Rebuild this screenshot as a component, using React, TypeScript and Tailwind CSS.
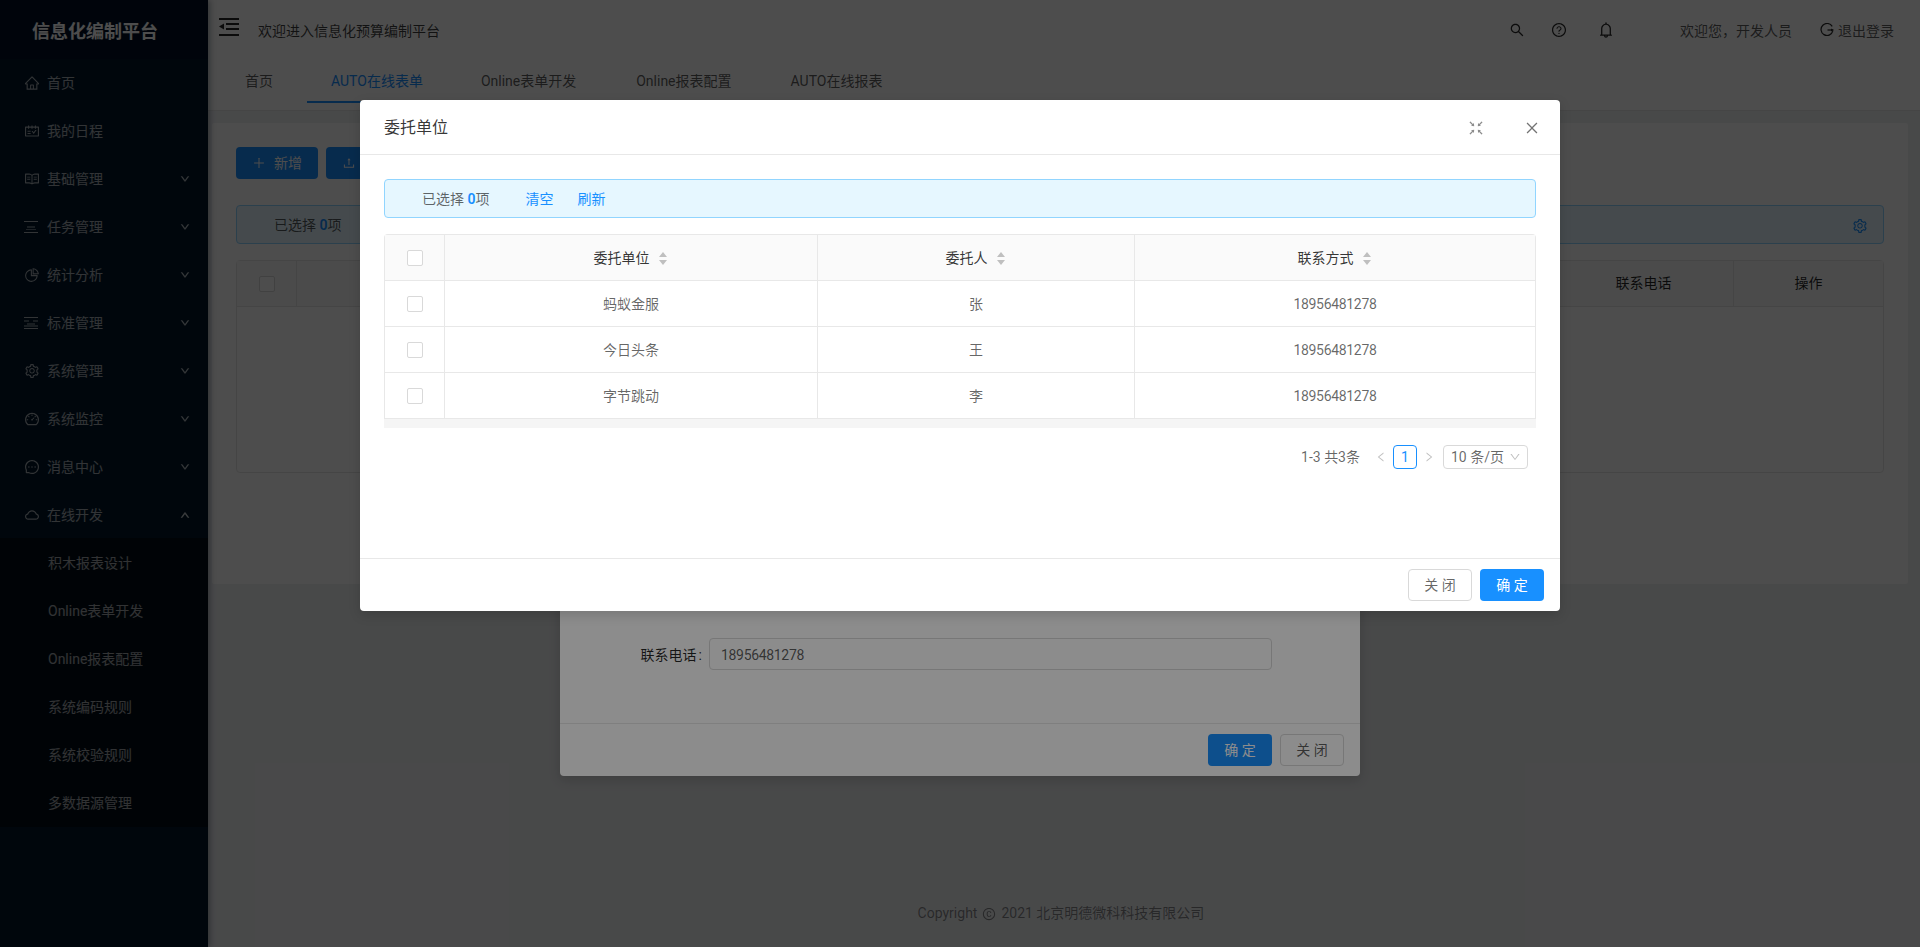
import React from "react";
import {
  AiOutlineHome, AiOutlineSchedule, AiOutlineRead, AiOutlinePieChart, AiOutlineSetting,
  AiOutlineDashboard, AiOutlineMessage, AiOutlineCloud, AiOutlineDown, AiOutlineUp,
  AiOutlineSearch, AiOutlineQuestionCircle, AiOutlineBell, AiOutlineFullscreenExit, AiOutlineClose,
  AiOutlineLeft, AiOutlineRight, AiOutlinePlus, AiOutlineUpload, AiOutlineCopyrightCircle,
} from "react-icons/ai";

const FONT = "font-['Roboto','Noto_Sans_CJK_SC',sans-serif]";

const TaskIcon = () => (
  <svg width="14" height="14" viewBox="0 0 14 14" fill="none" stroke="currentColor" strokeWidth="1">
    <path d="M0 1.5h14M3 7h8M0 12.5h14" />
    <path d="M2 9.5h10" strokeWidth="0.6" />
  </svg>
);
const StdIcon = () => (
  <svg width="14" height="14" viewBox="0 0 14 14" fill="none" stroke="currentColor" strokeWidth="1">
    <path d="M0 1.5h14M0 5h5M9 5h5M3 8h8M0 12.5h14M0 10h14" />
  </svg>
);
const LogoutIcon = () => (
  <svg width="14" height="14" viewBox="0 0 14 14" fill="none" stroke="currentColor" strokeWidth="1.2">
    <path d="M12.2 3.4A6 6 0 1 0 12.8 8.2" />
    <path d="M7.5 7h6" />
    <path d="M11.2 5.4L13.4 7l-2.2 1.6z" fill="currentColor" stroke="none" />
  </svg>
);
const MenuFold = () => (
  <svg width="20" height="18" viewBox="0 0 20 18" fill="currentColor">
    <rect x="0" y="0" width="20" height="2" />
    <rect x="7" y="5" width="13" height="2" />
    <rect x="7" y="10" width="13" height="2" />
    <rect x="0" y="16" width="20" height="2" />
    <path d="M5 5.5v6L0 8.5z" />
  </svg>
);
const Sorter = () => (
  <svg width="8" height="13" viewBox="0 0 8 13" fill="#bfbfbf" className="ml-[9px]">
    <path d="M4 0L8 5H0zM4 13L0 8h8z" />
  </svg>
);
const Check = () => (
  <span className="block w-4 h-4 mx-auto bg-white border border-[#d9d9d9] rounded-[2px]" />
);

const menu: { label: string; icon: React.ReactNode; arrow?: "down" | "up" }[] = [
  { label: "首页", icon: <AiOutlineHome size={16} /> },
  { label: "我的日程", icon: <AiOutlineSchedule size={16} /> },
  { label: "基础管理", icon: <AiOutlineRead size={16} />, arrow: "down" },
  { label: "任务管理", icon: <TaskIcon />, arrow: "down" },
  { label: "统计分析", icon: <AiOutlinePieChart size={16} />, arrow: "down" },
  { label: "标准管理", icon: <StdIcon />, arrow: "down" },
  { label: "系统管理", icon: <AiOutlineSetting size={16} />, arrow: "down" },
  { label: "系统监控", icon: <AiOutlineDashboard size={16} />, arrow: "down" },
  { label: "消息中心", icon: <AiOutlineMessage size={16} />, arrow: "down" },
  { label: "在线开发", icon: <AiOutlineCloud size={16} />, arrow: "up" },
];
const sub = ["积木报表设计", "Online表单开发", "Online报表配置", "系统编码规则", "系统校验规则", "多数据源管理"];

function Sidebar() {
  return (
    <aside className="w-[208px] shrink-0 h-full bg-[#001529] text-white/65 text-[14px] shadow-[2px_0_6px_rgba(0,21,41,0.35)] z-10">
      <div className="h-[59px] pt-[3px] bg-[#001226] flex items-center justify-center pr-[18px] text-[18px] font-bold text-white">
        信息化编制平台
      </div>
      <div className="pt-[4px]">
        {menu.map((m) => (
          <div key={m.label} className="h-10 mb-2 flex items-center pl-6 pr-[18px]">
            <span className="w-6 flex items-center -ml-px pl-px">{m.icon}</span>
            <span className="flex-1">{m.label}</span>
            {m.arrow === "down" && <AiOutlineDown size={10} strokeWidth={60} />}
            {m.arrow === "up" && <AiOutlineUp size={10} strokeWidth={90} />}
          </div>
        ))}
        <div className="bg-[#000c17] -mt-[5px] pt-[5px] pb-[4px] flex flex-col gap-2">
          {sub.map((s) => (
            <div key={s} className="h-10 flex items-center pl-12">
              {s}
            </div>
          ))}
        </div>
      </div>
    </aside>
  );
}

function Topbar() {
  return (
    <header className="h-[60px] shrink-0 bg-white flex items-center pl-[11px] shadow-[0_1px_4px_rgba(0,21,41,0.08)] text-black/65">
      <span className="text-black/85 -mt-[6px]"><MenuFold /></span>
      <span className="ml-[19px] mt-[2px] text-[14px] text-black/75">欢迎进入信息化预算编制平台</span>
      <div className="ml-auto flex items-center text-black/85">
        <AiOutlineSearch size={16} className="mr-[26px]" />
        <AiOutlineQuestionCircle size={16} className="mr-[30px]" />
        <AiOutlineBell size={18} className="mr-[65px]" />
        <span className="text-[14px] mt-[2px] text-black/65 mr-[28px]">欢迎您，开发人员</span>
        <span className="mr-1"><LogoutIcon /></span>
        <span className="text-[14px] mt-[2px] text-black/65 mr-[26px]">退出登录</span>
      </div>
    </header>
  );
}

const tabs: { t: string; cls: string }[] = [
  { t: "首页", cls: "border-transparent" },
  { t: "AUTO在线表单", cls: "text-[#1890ff] border-[#1890ff]" },
  { t: "Online表单开发", cls: "border-transparent" },
  { t: "Online报表配置", cls: "border-transparent ml-[2px]" },
  { t: "AUTO在线报表", cls: "border-transparent ml-[1px]" },
];

function Tabs() {
  return (
    <nav className="h-[51px] shrink-0 bg-white border-b border-[#e8e8e8] flex pl-[13px] gap-[10px] text-[14px] text-black/65">
      {tabs.map((x) => (
        <div key={x.t} className={"px-6 pt-[2px] h-[43px] flex items-center border-b-2 " + x.cls}>
          {x.t}
        </div>
      ))}
    </nav>
  );
}

function PageBody() {
  return (
    <main className="flex-1 min-h-0 bg-[#f0f2f5] pl-[4px] pt-3 flex flex-col">
      <div className="h-[461px] bg-white rounded-[2px] px-6 pt-6 w-[1696px] shrink-0">
        <div className="flex gap-2 mb-[26px]">
          <div className="w-[82px] h-8 bg-[#1890ff] rounded text-white text-[14px] flex items-center justify-center gap-2">
            <AiOutlinePlus size={14} />新增
          </div>
          <div className="w-[82px] h-8 bg-[#1890ff] rounded text-white text-[14px] flex items-center justify-center gap-2">
            <AiOutlineUpload size={14} />导入
          </div>
        </div>
        <div className="h-[39px] bg-[#e6f7ff] border border-[#91d5ff] rounded flex items-center pl-[37px] pr-[15px] pt-[2px] text-[14px] text-black/65 mb-4">
          已选择&nbsp;<b className="font-semibold text-[#1890ff]">0</b>项
          <AiOutlineSetting size={16} className="ml-auto text-[#1890ff]" />
        </div>
        <div className="h-[213px] border border-[#e8e8e8] rounded-t-[4px] rounded-b-[4px]">
          <div className="h-[46px] bg-[#fafafa] border-b border-[#e8e8e8] flex items-center text-[14px] text-black/85">
            <div className="w-[60px] h-full flex items-center border-r border-[#e8e8e8]"><Check /></div>
            <div className="flex-1" />
            <div className="w-[180px] h-full text-center leading-[45px] border-l border-[#e8e8e8]">联系电话</div>
            <div className="w-[150px] h-full text-center leading-[45px] border-l border-[#e8e8e8]">操作</div>
          </div>
        </div>
      </div>
      <footer className="mt-auto h-[60px] flex items-start justify-center pr-[10px] text-[14px] text-black/45">
        <span className="flex items-center gap-[5px] pt-[16px]">Copyright <AiOutlineCopyrightCircle size={14} /> 2021 北京明德微科科技有限公司</span>
      </footer>
    </main>
  );
}

function ModalBehind() {
  return (
    <div className="absolute left-[560px] top-[300px] w-[800px] h-[476px] bg-white rounded shadow-[0_4px_12px_rgba(0,0,0,0.15)] flex flex-col text-[14px]">
      <div className="flex-1 flex flex-col justify-end pb-[53px]">
        <div className="flex items-center">
          <label className="w-[149px] text-right pr-[7px] pt-[2px] text-black/85">联系电话<span className="ml-[2px]">:</span></label>
          <div className="w-[563px] h-8 border border-[#d9d9d9] rounded flex items-center px-[11px] pt-[2px] text-black/65 tracking-[-0.023em]">
            18956481278
          </div>
        </div>
      </div>
      <div className="h-[53px] border-t border-[#e8e8e8] flex items-center justify-end gap-2 pr-4">
        <div className="w-16 h-8 bg-[#1890ff] text-white rounded flex items-center justify-center">确 定</div>
        <div className="w-16 h-8 border border-[#d9d9d9] text-black/65 rounded flex items-center justify-center">关 闭</div>
      </div>
    </div>
  );
}

const rows = [
  ["蚂蚁金服", "张"],
  ["今日头条", "王"],
  ["字节跳动", "李"],
];

function ModalTop() {
  return (
    <div className="absolute left-[360px] top-[100px] w-[1200px] h-[511px] bg-white rounded shadow-[0_4px_12px_rgba(0,0,0,0.15)] flex flex-col text-[14px] text-black/60">
      <div className="h-[55px] shrink-0 pt-[2px] border-b border-[#e8e8e8] flex items-center pl-6 text-[16px] text-black/80">
        委托单位
        <AiOutlineFullscreenExit size={18} className="ml-auto text-black/45 mr-[39px]" />
        <AiOutlineClose size={16} className="text-black/55 mr-[20px]" />
      </div>
      <div className="flex-1 px-6 pt-6">
        <div className="h-[39px] pt-[2px] bg-[#e6f7ff] border border-[#91d5ff] rounded flex items-center pl-[37px]">
          已选择&nbsp;<b className="font-semibold text-[#1890ff]">0</b>项
          <span className="text-[#1890ff] ml-[36px]">清空</span>
          <span className="text-[#1890ff] ml-[24px]">刷新</span>
        </div>
        <div className="mt-4">
          <table className="w-full table-fixed border-separate border-spacing-0 border-t border-l border-r border-[#e8e8e8] rounded-t-[4px]">
            <colgroup>
              <col className="w-[60px]" />
              <col className="w-[373px]" />
              <col className="w-[317px]" />
              <col />
            </colgroup>
            <thead>
              <tr className="h-[46px] bg-[#fafafa] text-black/80">
                <th className="font-normal border-b border-r border-[#e8e8e8]"><Check /></th>
                {["委托单位", "委托人", "联系方式"].map((h, i) => (
                  <th key={h} className={"font-normal border-b border-[#e8e8e8] pt-[2px] " + (i < 2 ? "border-r" : "")}>
                    <span className="inline-flex items-center pr-[2px]">{h}<Sorter /></span>
                  </th>
                ))}
              </tr>
            </thead>
            <tbody>
              {rows.map((r) => (
                <tr key={r[0]} className="h-[46px] text-center">
                  <td className="border-b border-r border-[#e8e8e8]"><Check /></td>
                  <td className="border-b border-r border-[#e8e8e8] pt-[2px]">{r[0]}</td>
                  <td className="border-b border-r border-[#e8e8e8] pt-[2px]">{r[1]}</td>
                  <td className="border-b border-[#e8e8e8] pt-[2px] tracking-[-0.023em]">18956481278</td>
                </tr>
              ))}
            </tbody>
          </table>
          <div className="h-[9px] bg-[#f5f5f5]" />
        </div>
        <div className="mt-[17px] h-6 flex items-center pr-2 text-[14px]">
          <span className="ml-auto">1-3 共3条</span>
          <AiOutlineLeft size={12} className="ml-[15px] text-black/25" />
          <span className="ml-[6px] w-6 h-6 border border-[#1890ff] rounded text-[#1890ff] flex items-center justify-center">1</span>
          <AiOutlineRight size={12} className="ml-[6px] text-black/25" />
          <span className="ml-[8px] w-[85px] h-6 border border-[#d9d9d9] rounded flex items-center pl-[7px]">
            10 条/页
            <AiOutlineDown size={12} className="ml-auto mr-[6px] text-black/25" />
          </span>
        </div>
      </div>
      <div className="h-[53px] shrink-0 border-t border-[#e8e8e8] flex items-center justify-end gap-2 pr-4">
        <div className="w-16 h-8 border border-[#d9d9d9] rounded flex items-center justify-center">关 闭</div>
        <div className="w-16 h-8 bg-[#1890ff] text-white rounded flex items-center justify-center">确 定</div>
      </div>
    </div>
  );
}

export default function App() {
  return (
    <div className={"relative w-full h-[947px] overflow-hidden flex " + FONT}>
      <Sidebar />
      <div className="flex-1 min-w-0 flex flex-col">
        <Topbar />
        <Tabs />
        <PageBody />
      </div>
      <div className="absolute inset-0 z-20 bg-black/45" />
      <div className="absolute inset-0 z-30">
        <ModalBehind />
      </div>
      <div className="absolute inset-0 z-40 bg-black/45" />
      <div className="absolute inset-0 z-50">
        <ModalTop />
      </div>
    </div>
  );
}
